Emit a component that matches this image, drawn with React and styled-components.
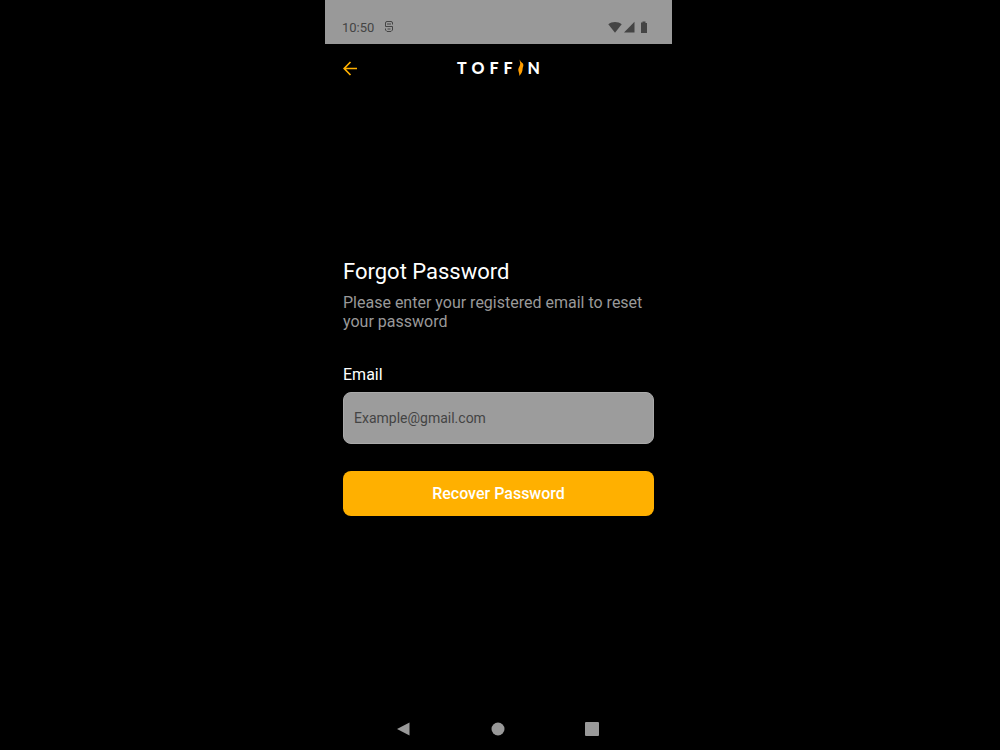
import React from "react";
import styled, { createGlobalStyle } from "styled-components";

const GlobalStyle = createGlobalStyle`
  * { box-sizing: border-box; }
  body {
    margin: 0;
    background: #000;
    color: #fff;
    font-family: Roboto, "Liberation Sans", sans-serif;
  }
`;

const Page = styled.div`
  display: flex;
  justify-content: center;
  min-height: 100vh;
  padding-right: 3px;
`;

const Phone = styled.div`
  display: flex;
  flex-direction: column;
  width: 100%;
  max-width: 347px;
`;

const StatusBar = styled.div`
  display: flex;
  align-items: center;
  justify-content: space-between;
  height: 44px;
  padding: 10px 23px 0 17px;
  background: #999;
  color: #444;
  font-size: 13px;
`;

const StatusGroup = styled.div`
  display: flex;
  align-items: center;
  gap: ${(p) => p.$gap}px;
`;

const Header = styled.header`
  display: grid;
  grid-template-columns: 1fr auto 1fr;
  align-items: center;
  height: 48px;
  padding: 0 18px;
`;

const BackButton = styled.button`
  display: flex;
  justify-self: start;
  padding: 0;
  border: 0;
  background: none;
  color: #ffb000;
`;

const Logo = styled.div`
  display: flex;
  align-items: center;
  font-family: Lato, sans-serif;
  font-size: 16px;
  font-weight: 900;
  line-height: 20px;
`;

const Wordmark = styled.span`
  letter-spacing: 5px;
`;

const Flame = styled.svg`
  margin-right: 4px;
`;

const Form = styled.form`
  display: flex;
  flex: 1;
  flex-direction: column;
  padding: 166px 18px 24px;
`;

const Title = styled.h1`
  margin: 0 0 8px;
  font-size: 22px;
  font-weight: 400;
  line-height: 27px;
`;

const Hint = styled.p`
  margin: 0 0 34px;
  color: #999;
  font-size: 16px;
  line-height: 19px;
`;

const Label = styled.label`
  margin-bottom: 7px;
  font-size: 16px;
  line-height: 20px;
`;

const Input = styled.input`
  width: 100%;
  height: 52px;
  margin-bottom: 27px;
  padding: 0 10px;
  border: 1px solid #aaa;
  border-radius: 8px;
  background: #9c9c9c;
  color: #444;
  font: 400 14px Roboto, sans-serif;

  &::placeholder {
    color: #444;
    opacity: 1;
  }
`;

const SubmitButton = styled.button`
  height: 45px;
  border: 0;
  border-radius: 8px;
  background: #ffb000;
  color: #fff;
  font: 500 16px Roboto, sans-serif;
`;

const NavBar = styled.nav`
  display: flex;
  justify-content: space-between;
  align-items: center;
  height: 42px;
  padding: 0 73px 0 71px;
`;

const NavButton = styled.button`
  display: flex;
  padding: 0;
  border: 0;
  background: none;
  color: #999;
`;

export default function App() {
  return (
    <>
      <GlobalStyle />
      <Page>
        <Phone>
          <StatusBar>
            <StatusGroup $gap={11}>
              <span>10:50</span>
              <svg width="8" height="12" viewBox="0 0 8 12" fill="none" stroke="currentColor">
                <path d="M0.500 5.500V2Q0.500 0.500 2 0.500H6Q7.500 0.500 7.500 2V3.500M2 3H6M0.500 5.500H7.500V9L6 10.500H2L0.500 9V7.500M2.500 8H5.500" />
              </svg>
            </StatusGroup>
            <StatusGroup $gap={2}>
              <svg width="14" height="12" viewBox="0 0 14 12" fill="currentColor">
                <path d="M0.300 3.200C4 0.200 10 0.200 13.700 3.200L7 11.700z" />
              </svg>
              <svg width="11" height="12" viewBox="0 0 11 12" fill="currentColor">
                <path d="M10.500 0.800V11.500H0z" />
              </svg>
              <svg width="12" height="12" viewBox="0 0 12 12" fill="currentColor">
                <path d="M4 1.500h1.500V0.500h3v1.500H10V12H4z" />
              </svg>
            </StatusGroup>
          </StatusBar>
          <Header>
            <BackButton type="button" aria-label="Back">
              <svg width="15" height="16" viewBox="0 0 15 16" fill="none" stroke="currentColor" strokeWidth="1.700">
                <path d="M14 8.500H1.500M7.500 2L1.200 8.500l6.300 6.500" />
              </svg>
            </BackButton>
            <Logo role="img" aria-label="Toffin">
              <Wordmark>TOFF</Wordmark>
              <Flame width="6" height="18" viewBox="0 0 6 18" fill="#ff9d00">
                <path d="M2 0.500C1.800 2.500 3.500 3 4.700 4.300C6.200 6.500 4.700 8 4.600 10C4.500 12 4 14 1.200 17C1.700 14 0.200 13 0.300 10.500C0.400 8 2.300 7 2.200 4.500C2.100 3 1.200 2 2 0.500z" />
              </Flame>
              <span>N</span>
            </Logo>
          </Header>
          <Form onSubmit={(e) => e.preventDefault()}>
            <Title>Forgot Password</Title>
            <Hint>Please enter your registered email to reset your password</Hint>
            <Label htmlFor="email">Email</Label>
            <Input id="email" type="email" placeholder="Example@gmail.com" />
            <SubmitButton type="submit">Recover Password</SubmitButton>
          </Form>
          <NavBar aria-label="System">
            <NavButton type="button" aria-label="Back">
              <svg width="14" height="14" viewBox="0 0 14 14" fill="currentColor">
                <path d="M13.500 0.500V13.500L1 7z" />
              </svg>
            </NavButton>
            <NavButton type="button" aria-label="Home">
              <svg width="14" height="14" viewBox="0 0 14 14" fill="currentColor">
                <circle cx="7" cy="7" r="6.500" />
              </svg>
            </NavButton>
            <NavButton type="button" aria-label="Recent apps">
              <svg width="14" height="14" viewBox="0 0 14 14" fill="currentColor">
                <rect width="14" height="14" rx="1" />
              </svg>
            </NavButton>
          </NavBar>
        </Phone>
      </Page>
    </>
  );
}
